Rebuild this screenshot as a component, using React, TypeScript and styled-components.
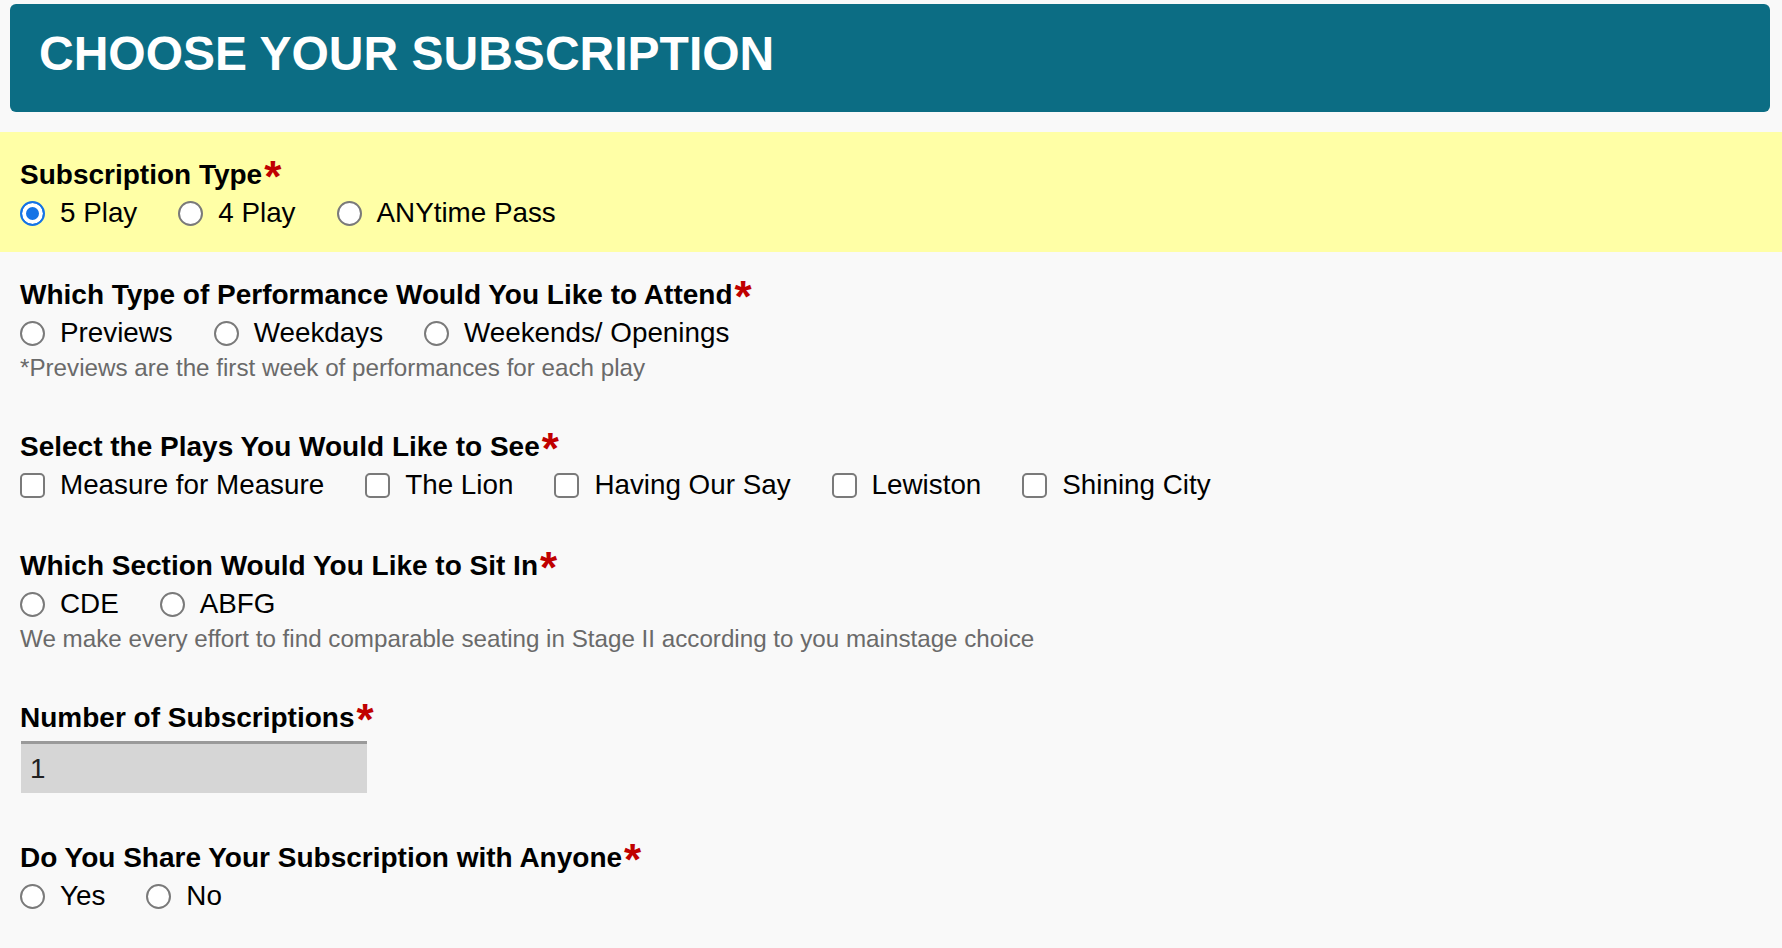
import React from "react";
import styled, { createGlobalStyle } from "styled-components";

const GlobalStyle = createGlobalStyle`
  html, body {
    margin: 0;
    padding: 0;
    background: #f9f9f9;
  }
  body {
    font-family: "Liberation Sans", Arial, Helvetica, sans-serif;
    color: #000;
  }
  * { box-sizing: border-box; }
`;

const Page = styled.div`
  min-height: 100vh;
  background: #f9f9f9;
  padding-top: 4px;
`;

const HeaderBar = styled.header`
  margin: 0 12px 0 10px;
  height: 108px;
  padding: 26px 29px 0;
  background: #0c6d84;
  border-radius: 6px;
`;

const Title = styled.h1`
  margin: 0;
  font-family: "Liberation Sans", Arial, sans-serif;
  font-size: 48px;
  line-height: 48px;
  font-weight: 700;
  color: #fff;
  letter-spacing: 0;
`;

const HighlightSection = styled.section`
  margin-top: 20px;
  background: #ffffa6;
  padding: 27px 20px 23px;
`;

const Fields = styled.div`
  display: flex;
  flex-direction: column;
  gap: 49px;
  padding: 27px 20px 40px;
`;

const Field = styled.div`
  display: flex;
  flex-direction: column;
`;

const Label = styled.div`
  font-size: 28px;
  line-height: 32px;
  font-weight: 700;
  color: #000;
  margin-bottom: 6px;
`;

const Required = styled.span`
  color: #c00000;
  font-size: 44px;
  font-weight: 700;
  line-height: 0;
  vertical-align: -8px;
  margin-left: 2px;
`;

const OptionRow = styled.div`
  display: flex;
  align-items: center;
  gap: 41px;
  height: 32px;
`;

const Option = styled.label`
  display: flex;
  align-items: center;
  gap: 15px;
  font-size: 27.8px;
  line-height: 32px;
  color: #000;
  cursor: pointer;
`;

const RadioInput = styled.input.attrs({ type: "radio" })`
  appearance: none;
  -webkit-appearance: none;
  margin: 0;
  width: 25px;
  height: 25px;
  flex: 0 0 25px;
  border-radius: 50%;
  border: 2px solid #7a7a7a;
  background: #fff;
  &:checked {
    border-color: #1473e6;
    background: #1473e6;
    box-shadow: inset 0 0 0 4px #fff;
  }
`;

const CheckboxInput = styled.input.attrs({ type: "checkbox" })`
  appearance: none;
  -webkit-appearance: none;
  margin: 0;
  width: 25px;
  height: 25px;
  flex: 0 0 25px;
  border-radius: 5px;
  border: 2px solid #7a7a7a;
  background: #fff;
`;

const Hint = styled.div`
  margin-top: 5px;
  font-size: 24.2px;
  line-height: 28px;
  color: #6a6a6a;
`;

const NumberInput = styled.input`
  margin: 1px 0 0 1px;
  width: 346px;
  height: 52px;
  border: none;
  border-top: 3px solid #9a9a9a;
  background: #d6d6d6;
  padding: 0 9px;
  font-family: "Liberation Sans", Arial, sans-serif;
  font-size: 27.7px;
  color: #222;
  outline: none;
`;

type Opt = { label: string; checked?: boolean };

const RadioGroup: React.FC<{ name: string; options: Opt[] }> = ({ name, options }) => (
  <OptionRow>
    {options.map((o) => (
      <Option key={o.label}>
        <RadioInput name={name} defaultChecked={o.checked} />
        {o.label}
      </Option>
    ))}
  </OptionRow>
);

const CheckGroup: React.FC<{ options: string[] }> = ({ options }) => (
  <OptionRow>
    {options.map((o) => (
      <Option key={o}>
        <CheckboxInput />
        {o}
      </Option>
    ))}
  </OptionRow>
);

const FieldLabel: React.FC<{ children: React.ReactNode }> = ({ children }) => (
  <Label>
    {children}
    <Required>*</Required>
  </Label>
);

export default function App() {
  return (
    <>
      <GlobalStyle />
      <Page>
        <HeaderBar>
          <Title>CHOOSE YOUR SUBSCRIPTION</Title>
        </HeaderBar>

        <HighlightSection>
          <Field>
            <FieldLabel>Subscription Type</FieldLabel>
            <RadioGroup
              name="subType"
              options={[
                { label: "5 Play", checked: true },
                { label: "4 Play" },
                { label: "ANYtime Pass" },
              ]}
            />
          </Field>
        </HighlightSection>

        <Fields>
          <Field>
            <FieldLabel>Which Type of Performance Would You Like to Attend</FieldLabel>
            <RadioGroup
              name="perfType"
              options={[{ label: "Previews" }, { label: "Weekdays" }, { label: "Weekends/ Openings" }]}
            />
            <Hint>*Previews are the first week of performances for each play</Hint>
          </Field>

          <Field>
            <FieldLabel>Select the Plays You Would Like to See</FieldLabel>
            <CheckGroup
              options={["Measure for Measure", "The Lion", "Having Our Say", "Lewiston", "Shining City"]}
            />
          </Field>

          <Field>
            <FieldLabel>Which Section Would You Like to Sit In</FieldLabel>
            <RadioGroup name="section" options={[{ label: "CDE" }, { label: "ABFG" }]} />
            <Hint>We make every effort to find comparable seating in Stage II according to you mainstage choice</Hint>
          </Field>

          <Field>
            <FieldLabel>Number of Subscriptions</FieldLabel>
            <NumberInput type="text" defaultValue="1" />
          </Field>

          <Field>
            <FieldLabel>Do You Share Your Subscription with Anyone</FieldLabel>
            <RadioGroup name="share" options={[{ label: "Yes" }, { label: "No" }]} />
          </Field>
        </Fields>
      </Page>
    </>
  );
}
